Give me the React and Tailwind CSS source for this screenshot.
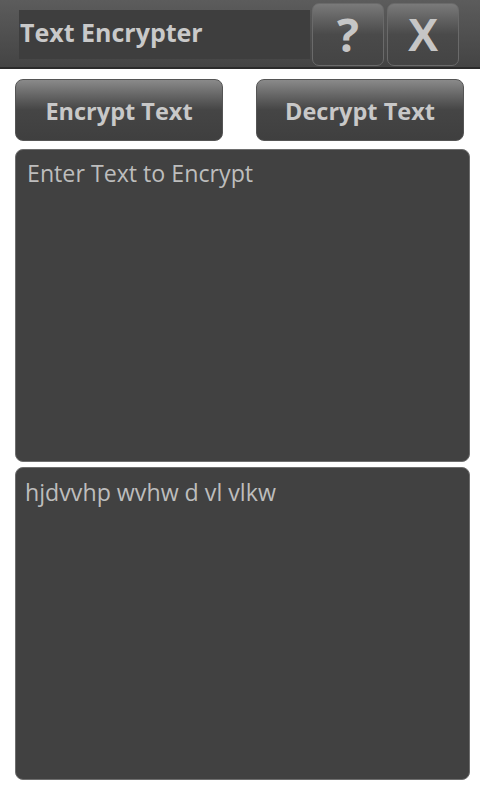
export default function App() {
  const font = { fontFamily: '"Open Sans", "Noto Sans", "DejaVu Sans", sans-serif' };
  return (
    <div className="w-[480px] h-[800px] bg-white overflow-hidden" style={font}>
      <div className="h-[69px] bg-gradient-to-b from-[#5c5c5c] to-[#444444] border-b-2 border-[#2a2a2a] flex items-start relative">
        <div className="ml-[19px] mt-[10px] h-[49px] w-[291px] bg-[#3e3e3e] flex items-center pl-[1px] pb-[5px]">
          <span className="text-[25px] font-bold text-[#c9c9c9] leading-none">Text Encrypter</span>
        </div>
        <div className="ml-[2px] mt-[3px] h-[63px] w-[72px] rounded-[7px] border border-[#6a6a6a] bg-gradient-to-b from-[#7a7a7a] via-[#4a4a4a] to-[#444444] flex items-center justify-center pb-[2px]">
          <span className="text-[46px] font-bold text-[#c6c6c6] leading-none">?</span>
        </div>
        <div className="ml-[3px] mt-[3px] h-[63px] w-[72px] rounded-[7px] border border-[#6a6a6a] bg-gradient-to-b from-[#7a7a7a] via-[#4a4a4a] to-[#444444] flex items-center justify-center">
          <span className="text-[46px] font-bold text-[#c6c6c6] leading-none" style={{ fontFamily: '"Liberation Sans", Arial, sans-serif' }}>X</span>
        </div>
      </div>
      <div className="px-[15px]">
        <div className="mt-[10px] flex gap-[33px]">
          <div className="w-[208px] h-[62px] rounded-[8px] border border-[#555] bg-gradient-to-b from-[#8a8a8a] via-[#454545] to-[#3f3f3f] flex items-center justify-center pt-[3px]">
            <span className="text-[23.5px] font-bold text-[#c8c8c8]">Encrypt Text</span>
          </div>
          <div className="w-[208px] h-[62px] rounded-[8px] border border-[#555] bg-gradient-to-b from-[#8a8a8a] via-[#454545] to-[#3f3f3f] flex items-center justify-center pt-[3px]">
            <span className="text-[23.5px] font-bold text-[#c8c8c8]">Decrypt Text</span>
          </div>
        </div>
        <div className="mt-[8px] w-[455px] h-[313px] rounded-[8px] border border-[#6e6e6e] bg-[#414141] px-[11px] pt-[8px]">
          <span className="text-[23.2px] text-[#bdbdbd] leading-[30px]">Enter Text to Encrypt</span>
        </div>
        <div className="mt-[5px] w-[455px] h-[313px] rounded-[8px] border border-[#6e6e6e] bg-[#414141] px-[9px] pt-[9px]">
          <span className="text-[23.2px] text-[#bdbdbd] leading-[30px]">hjdvvhp wvhw d vl vlkw</span>
        </div>
      </div>
    </div>
  );
}
